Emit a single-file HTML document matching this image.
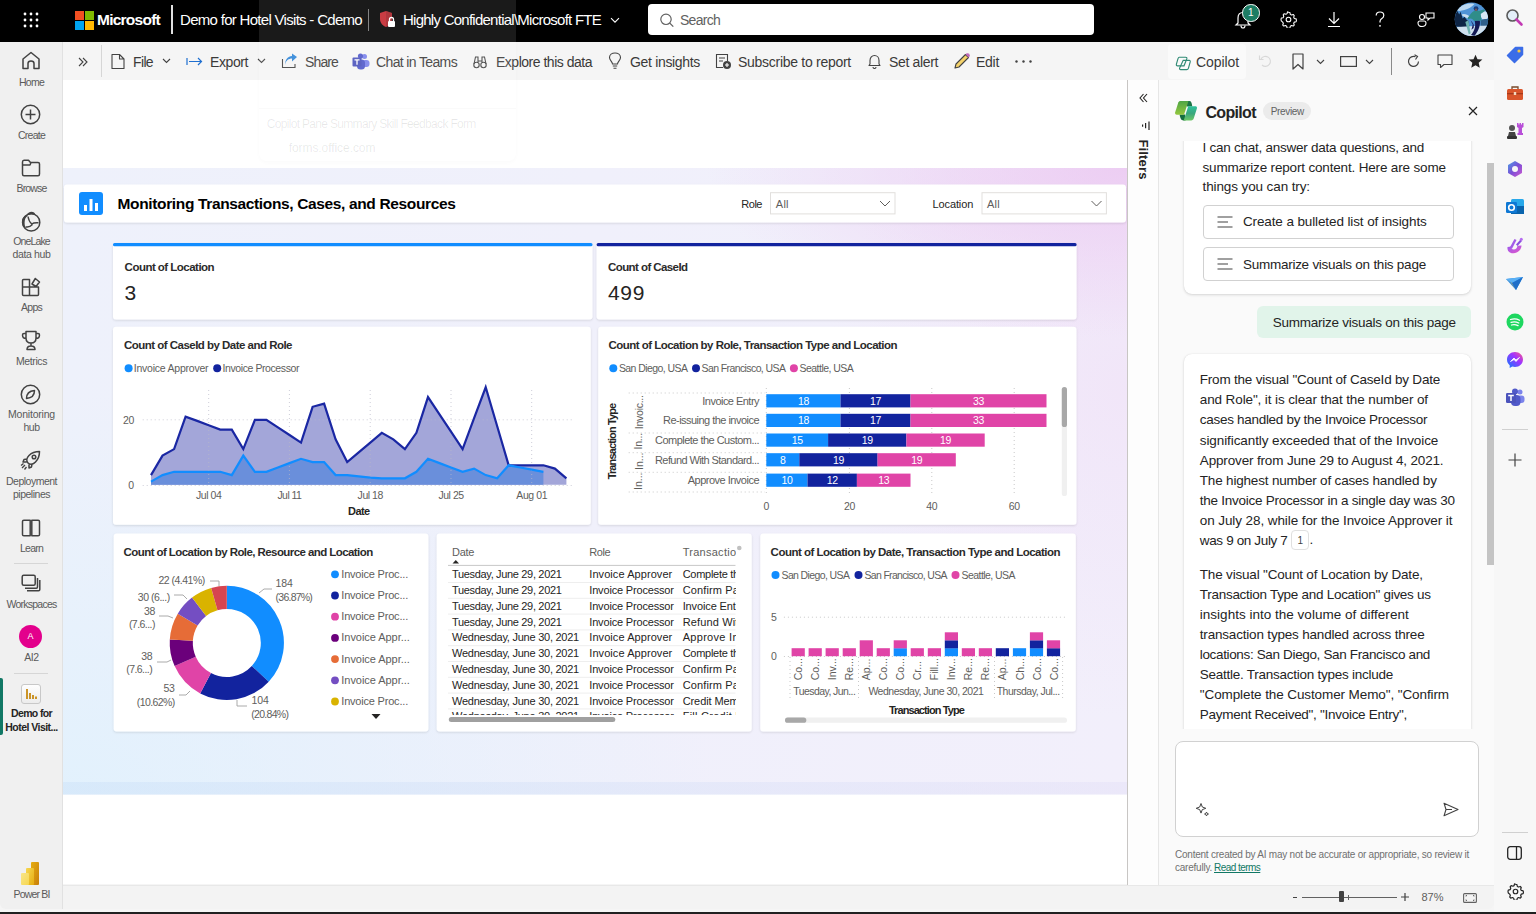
<!DOCTYPE html><html><head><meta charset="utf-8">
<style>
*{box-sizing:border-box;margin:0;padding:0}
html,body{width:1536px;height:914px;overflow:hidden;background:#202020;font-family:"Liberation Sans",sans-serif;color:#252423}
.abs{position:absolute}
#win{position:absolute;left:0;top:0;width:1536px;height:912px;background:#f5f5f5;overflow:hidden}
#topbar{position:absolute;left:0;top:0;width:1494px;height:42px;background:#000}
#nav{position:absolute;left:0;top:42px;width:63px;height:867px;background:#f0f0f0;border-right:1px solid #e1e1e1;border-bottom-left-radius:6px}
#toolbar{position:absolute;left:63px;top:42px;width:1431px;height:38px;background:#f5f5f5}
#canvas{position:absolute;left:63px;top:80px;width:1064px;height:804px;background:#fff;overflow:hidden}
#status{position:absolute;left:63px;top:884px;width:1431px;height:24px;background:#f3f3f3;border-top:1px solid #e6e6e6}
#filters{position:absolute;left:1127px;top:80px;width:35px;height:804px;background:#fafafa;border-left:1px solid #c8c6c4}
#copilot{position:absolute;left:1162px;top:80px;width:332px;height:804px;background:#fafafa;overflow:hidden}
#edge{position:absolute;left:1494px;top:0;width:42px;height:914px;background:#f7f7f7}
.t{position:absolute;white-space:nowrap;line-height:1}
.navl{position:absolute;left:0;width:63px;text-align:center;font-size:10.5px;color:#5a5a5a;line-height:13px;white-space:nowrap}
.tb{position:absolute;top:54px;font-size:14px;color:#3b3a39;white-space:nowrap;line-height:16px}
</style></head>
<body>
<div id="win">
  <div id="topbar">
    <svg class="abs" style="left:23px;top:12px" width="16" height="16" viewBox="0 0 16 16" fill="#fff"><circle cx="2" cy="2" r="1.4"></circle><circle cx="8" cy="2" r="1.4"></circle><circle cx="14" cy="2" r="1.4"></circle><circle cx="2" cy="8" r="1.4"></circle><circle cx="8" cy="8" r="1.4"></circle><circle cx="14" cy="8" r="1.4"></circle><circle cx="2" cy="14" r="1.4"></circle><circle cx="8" cy="14" r="1.4"></circle><circle cx="14" cy="14" r="1.4"></circle></svg>
    <svg class="abs" style="left:75px;top:11px" width="19" height="19" viewBox="0 0 19 19"><rect x="0" y="0" width="9" height="9" fill="#f25022"></rect><rect x="10" y="0" width="9" height="9" fill="#7fba00"></rect><rect x="0" y="10" width="9" height="9" fill="#00a4ef"></rect><rect x="10" y="10" width="9" height="9" fill="#ffb900"></rect></svg>
    <div class="t" style="left: 97px; top: 12px; font-size: 15.5px; font-weight: bold; color: rgb(255, 255, 255); --w: 63; letter-spacing: -0.75px;">Microsoft</div>
    <div class="abs" style="left:171px;top:5px;width:1.5px;height:29px;background:#e0e0e0"></div>
    <div class="t" style="left: 180px; top: 12px; font-size: 15px; color: rgb(255, 255, 255); --w: 182; letter-spacing: -0.7px;">Demo for Hotel Visits - Cdemo</div>
    <div class="abs" style="left:368px;top:9px;width:1px;height:22px;background:#777"></div>
    <svg class="abs" style="left:379px;top:10px" width="17" height="19" viewBox="0 0 17 19"><path d="M7 1 L13 3 L13 9 C13 13 10 16 7 17 C4 16 1 13 1 9 L1 3 Z" fill="#c4262e"></path><path d="M7 1 L13 3 L13 9 C13 13 10 16 7 17 Z" fill="#8a1c22" opacity=".5"></path><rect x="9" y="11" width="7" height="6" rx="1" fill="#fff"></rect><path d="M10.5 11 V9.5 a2 2 0 0 1 4 0 V11" stroke="#fff" stroke-width="1.3" fill="none"></path></svg>
    <div class="t" style="left: 403px; top: 12px; font-size: 15px; color: rgb(255, 255, 255); --w: 198; letter-spacing: -0.745px;">Highly Confidential\Microsoft FTE</div>
    <svg class="abs" style="left:610px;top:17px" width="10" height="7" viewBox="0 0 10 7"><path d="M1 1.2 L5 5.2 L9 1.2" stroke="#fff" stroke-width="1.1" fill="none"></path></svg>
    <div class="abs" style="left:648px;top:4px;width:446px;height:31px;background:#fff;border-radius:4px"></div>
    <svg class="abs" style="left:659px;top:12px" width="16" height="16" viewBox="0 0 16 16"><circle cx="7" cy="7.3" r="5.2" stroke="#616161" stroke-width="1.2" fill="none"></circle><path d="M10.8 11.1 L14.3 14.6" stroke="#616161" stroke-width="1.3"></path></svg>
    <div class="t" style="left: 680px; top: 13px; font-size: 14px; color: rgb(97, 97, 97); --w: 40; letter-spacing: -0.727px;">Search</div>
    <svg class="abs" style="left:1234px;top:9px" width="20" height="20" viewBox="0 0 20 20"><path d="M4 14 L4 9 C4 5.5 6 3.5 9 3.5 C12 3.5 14 5.5 14 9 L14 14 L16 16 L2 16 Z" stroke="#fff" stroke-width="1.2" fill="none"></path><path d="M7 16.5 C7 18 8 19 9 19 C10 19 11 18 11 16.5" stroke="#fff" stroke-width="1.2" fill="none"></path></svg>
    <div class="abs" style="left:1242px;top:4px;width:17.5px;height:17.5px;border-radius:50%;background:#1e7d64;border:1.2px solid #fff;color:#fff;font-size:10px;text-align:center;line-height:15px">1</div>
    <svg class="abs" style="left:1280px;top:11px" width="17" height="17" viewBox="0 0 24 24"><path d="M12 1.8l2 .4.6 2.6 1.6.9 2.5-.8 1.4 1.5-.8 2.5.9 1.6 2.6.6.4 2-.4 2-2.6.6-.9 1.6.8 2.5-1.4 1.5-2.5-.8-1.6.9-.6 2.6-2 .4-2-.4-.6-2.6-1.6-.9-2.5.8-1.4-1.5.8-2.5-.9-1.6L1.8 14l-.4-2 .4-2 2.6-.6.9-1.6-.8-2.5 1.4-1.5 2.5.8 1.6-.9.6-2.6z" stroke="#fff" stroke-width="1.5" fill="none" stroke-linejoin="round"></path><circle cx="12" cy="12" r="3.3" stroke="#fff" stroke-width="1.5" fill="none"></circle></svg>
    <svg class="abs" style="left:1326px;top:11px" width="16" height="17" viewBox="0 0 16 17"><path d="M8 1 V12 M3 7.5 L8 12.5 L13 7.5 M2 15.5 H14" stroke="#fff" stroke-width="1.2" fill="none"></path></svg>
    <svg class="abs" style="left:1375px;top:11px" width="10" height="17" viewBox="0 0 10 17"><path d="M1.2 4.5 C1.2 2.3 2.9 1 5 1 C7.2 1 8.8 2.4 8.8 4.4 C8.8 6.2 7.6 7 6.5 7.8 C5.5 8.5 5 9.2 5 10.6 V11.5" stroke="#fff" stroke-width="1.2" fill="none"></path><circle cx="5" cy="14.8" r=".9" fill="#fff"></circle></svg>
    <svg class="abs" style="left:1417px;top:11px" width="18" height="17" viewBox="0 0 18 17"><circle cx="5" cy="6" r="2.5" stroke="#fff" stroke-width="1.1" fill="none"></circle><path d="M1 12 C1 10.5 2 10 3 10 H7 C8 10 9 10.5 9 12 C9 14.5 7 15.5 5 15.5 C3 15.5 1 14.5 1 12 Z" stroke="#fff" stroke-width="1.1" fill="none"></path><path d="M9 2 H17 V7 H13 L11 9 V7 H9 Z" stroke="#fff" stroke-width="1.1" fill="none"></path></svg>
    <svg class="abs" style="left:1450px;top:0px" width="44" height="40" viewBox="0 0 1005 914"><defs><clipPath id="av"><circle cx="490" cy="440" r="382"></circle></clipPath></defs><g clip-path="url(#av)">
<rect width="1005" height="914" fill="#4f93d6"></rect>
<path d="M150 230 C250 120 400 60 560 90 C500 160 420 200 330 230 C260 250 200 260 150 230 Z" fill="#bcd8f0"></path>
<path d="M700 260 C780 230 860 260 880 340 C880 420 820 460 740 440 C700 400 690 320 700 260 Z" fill="#d6e6f4"></path>
<path d="M260 330 C330 300 400 330 450 380 L420 420 C350 400 300 380 260 330 Z" fill="#c9def0"></path>
<path d="M100 600 L120 330 L170 250 L210 330 L240 270 L290 420 L330 380 L380 450 L420 480 L450 640 Z" fill="#0e2545"></path>
<path d="M700 470 C760 440 830 430 880 440 L880 600 L700 600 Z" fill="#2f5f8a"></path>
<path d="M100 620 C300 600 600 590 900 580 L900 914 L100 914 Z" fill="#cfe0ee"></path>
<path d="M350 500 L420 460 L470 760 L430 790 Z" fill="#6fb3b0"></path>
<path d="M470 470 C520 520 560 560 540 640 L490 680 L520 560 Z" fill="#1d1f5e"></path>
<path d="M560 460 L680 470 C700 560 660 700 560 820 L480 800 C560 700 600 600 560 460 Z" fill="#141a55"></path>
<path d="M470 320 C520 250 600 230 660 250 L780 210 L800 250 L700 320 L720 470 L550 480 C520 440 480 400 420 440 L400 410 C430 380 450 350 470 320 Z" fill="#2f8d89"></path>
<circle cx="595" cy="195" r="55" fill="#1b3d7a"></circle><circle cx="595" cy="225" r="28" fill="#7a5a55"></circle>
</g></svg>
  </div>
  <div id="nav"></div>
  <svg class="abs" style="left:21px;top:51px" width="20" height="19" viewBox="0 0 20 19"><path d="M2 17.5 V8 L10 1.5 L18 8 V17.5 H13 V12.5 C13 11 12 10 10 10 C8 10 7 11 7 12.5 V17.5 Z" stroke="#424242" stroke-width="1.5" fill="none" stroke-linejoin="round"></path></svg>
  <div class="navl" style="top:75.5px"><span style="--w: 25; letter-spacing: -0.754px;">Home</span></div>
  <svg class="abs" style="left:20px;top:104px" width="21" height="21" viewBox="0 0 21 21"><circle cx="10.5" cy="10.5" r="9.2" stroke="#424242" stroke-width="1.5" fill="none" stroke-linejoin="round"></circle><path d="M10.5 5.5 V15.5 M5.5 10.5 H15.5" stroke="#424242" stroke-width="1.5" fill="none" stroke-linejoin="round"></path></svg>
  <div class="navl" style="top:128.5px"><span style="--w: 27; letter-spacing: -0.753px;">Create</span></div>
  <svg class="abs" style="left:21px;top:159px" width="20" height="18" viewBox="0 0 20 18"><path d="M1.5 3 C1.5 2 2 1.2 3 1.2 H7.5 L9.5 3.5 H17 C18 3.5 18.5 4.2 18.5 5 V15 C18.5 16 18 16.8 17 16.8 H3 C2 16.8 1.5 16 1.5 15 Z M1.5 6 H9 L10 3.5" stroke="#424242" stroke-width="1.5" fill="none" stroke-linejoin="round"></path></svg>
  <div class="navl" style="top:181.5px"><span style="--w: 30; letter-spacing: -0.836px;">Browse</span></div>
  <svg class="abs" style="left:15px;top:205px" width="32" height="32" viewBox="0 0 32 32"><circle cx="16.2" cy="17.4" r="8.6" stroke="#424242" stroke-width="1.5" fill="none"></circle><path d="M10.5 10.5 C7.5 12 6.8 15 7 18 C7.3 21 9 23 11 23.5 C9.8 21.5 9.3 18.5 9.8 15.5 C10.2 13 11.5 11.5 13 10.8 Z" fill="#424242"></path><path d="M11 11 C12.5 8 14.5 6.8 16.5 6.8 C18.5 6.8 20 8 20.5 9.8 C18 8.8 14.5 9 11 11 Z" fill="#424242"></path><path d="M13 11.5 C13.5 14.5 15 17.5 16.8 19 C18 18 19.5 17.5 23.5 17.8 M10.5 21.8 C13 22.5 15.5 21.5 17.5 19.5" stroke="#424242" stroke-width="1.4" fill="none"></path></svg>
  <div class="navl" style="top:235.0px"><span style="--w: 36.5; letter-spacing: -0.875px;">OneLake</span></div><div class="navl" style="top:248.0px"><span style="--w: 38; letter-spacing: -0.359px;">data hub</span></div>
  <svg class="abs" style="left:21px;top:277px" width="20" height="20" viewBox="0 0 20 20"><path d="M1.5 10 H8.5 V18.5 H2.5 C2 18.5 1.5 18 1.5 17.5 Z M8.5 10 H17.5 V17.5 C17.5 18 17 18.5 16.5 18.5 H8.5 M1.5 10 V3.5 C1.5 3 2 2.5 2.5 2.5 H8.5 V10 M11 7 L14.3 1.5 L18.5 5 L15 9.5 Z" stroke="#424242" stroke-width="1.5" fill="none" stroke-linejoin="round"></path></svg>
  <div class="navl" style="top:301.0px"><span style="--w: 21; letter-spacing: -0.734px;">Apps</span></div>
  <svg class="abs" style="left:21px;top:330px" width="20" height="21" viewBox="0 0 20 21"><path d="M5 1.5 H15 V8 C15 11 13 13 10 13 C7 13 5 11 5 8 Z M5 3.5 H3 C1.8 3.5 1.5 4 1.5 5 C1.5 7 3 8.5 5 8.5 M15 3.5 H17 C18.2 3.5 18.5 4 18.5 5 C18.5 7 17 8.5 15 8.5 M10 13 V16 M6 19.5 C6 17 8 16 10 16 C12 16 14 17 14 19.5 Z" stroke="#424242" stroke-width="1.5" fill="none" stroke-linejoin="round"></path></svg>
  <div class="navl" style="top:354.5px"><span style="--w: 31; letter-spacing: -0.406px;">Metrics</span></div>
  <svg class="abs" style="left:20px;top:384px" width="21" height="21" viewBox="0 0 21 21"><circle cx="10.5" cy="10.5" r="9.2" stroke="#424242" stroke-width="1.5" fill="none" stroke-linejoin="round"></circle><path d="M6.5 14.5 C6.5 10 9.5 7 14.5 6.5 C14.5 11 11.5 14 6.5 14.5 Z" stroke="#424242" stroke-width="1.5" fill="none" stroke-linejoin="round"></path></svg>
  <div class="navl" style="top:408.0px"><span style="--w: 47; letter-spacing: -0.203px;">Monitoring</span></div><div class="navl" style="top:421.0px"><span style="--w: 16; letter-spacing: -0.51px;">hub</span></div>
  <svg class="abs" style="left:20px;top:450px" width="22" height="21" viewBox="0 0 22 21"><path d="M8 13 C6 11 6.5 8 9 5.5 C11.5 3 15 1.5 19.5 1.5 C19.5 6 18 9.5 15.5 12 C13 14.5 10 15 8 13 Z M7 9 L4 9.5 L3 12 L6.5 12 M12 14 L11.5 17 L9 18 L9 14.5" stroke="#424242" stroke-width="1.5" fill="none" stroke-linejoin="round"></path><circle cx="14" cy="7" r="1.8" stroke="#424242" stroke-width="1.5" fill="none" stroke-linejoin="round"></circle><path d="M5 15 L2 18 M6.5 17 L4.5 19.5 M3.5 13.5 L1 15.5" stroke="#424242" stroke-width="1.3"></path></svg>
  <div class="navl" style="top:474.5px"><span style="--w: 51; letter-spacing: -0.503px;">Deployment</span></div><div class="navl" style="top:488.0px"><span style="--w: 37; letter-spacing: -0.495px;">pipelines</span></div>
  <svg class="abs" style="left:21px;top:519px" width="20" height="18" viewBox="0 0 20 18"><path d="M1.5 2.5 C1.5 1.8 2 1.2 2.8 1.2 H9.2 V16.8 H2.8 C2 16.8 1.5 16.2 1.5 15.5 Z M10.8 1.2 H17.2 C18 1.2 18.5 1.8 18.5 2.5 V15.5 C18.5 16.2 18 16.8 17.2 16.8 H10.8 Z" stroke="#424242" stroke-width="1.5" fill="none" stroke-linejoin="round"></path></svg>
  <div class="navl" style="top:541.5px"><span style="--w: 23; letter-spacing: -0.772px;">Learn</span></div>
  <div class="abs" style="left:14px;top:563px;width:34px;height:1px;background:#d6d6d6"></div>
  <svg class="abs" style="left:21px;top:574px" width="20" height="19" viewBox="0 0 20 19"><rect x="1.2" y="1.2" width="13" height="10" rx="1.5" stroke="#424242" stroke-width="1.5" fill="none" stroke-linejoin="round"></rect><path d="M16.5 4 V13 C16.5 13.7 16 14.2 15.3 14.2 H4 M18.8 6 V15.5 C18.8 16.3 18.3 16.8 17.5 16.8 H6" stroke="#424242" stroke-width="1.5" fill="none" stroke-linejoin="round"></path></svg>
  <div class="navl" style="top:598.0px"><span style="--w: 50; letter-spacing: -0.758px;">Workspaces</span></div>
  <div class="abs" style="left:19px;top:625px;width:23px;height:23px;border-radius:50%;background:#e3008c;color:#fff;font-size:9px;text-align:center;line-height:23px">A</div>
  <div class="navl" style="top:650.5px"><span style="--w: 14.5; letter-spacing: -0.422px;">AI2</span></div>
  <div class="abs" style="left:14px;top:673px;width:34px;height:1px;background:#d6d6d6"></div>
  <div class="abs" style="left:0;top:678px;width:2.5px;height:57px;background:#117865;border-radius:0 2px 2px 0"></div>
  <div class="abs" style="left:21px;top:684px;width:20px;height:20px;border-radius:3px;background:linear-gradient(#fefefe,#ececec);border:1px solid #c8c8c8"></div>
  <svg class="abs" style="left:24px;top:687px" width="14" height="14" viewBox="0 0 14 14"><path d="M3 2 V12 M6 6 V12 M9 8 V12 M12 9.5 V12" stroke="#c78a12" stroke-width="1.8"></path></svg>
  <div class="navl" style="top:707px;font-weight:bold;color:#252423"><span style="--w: 41; letter-spacing: -0.637px;">Demo for</span></div><div class="navl" style="top:721px;font-weight:bold;color:#252423"><span style="--w: 52.5; letter-spacing: -0.529px;">Hotel Visit...</span></div>
  <svg class="abs" style="left:21px;top:862px" width="18" height="23" viewBox="0 0 18 23"><defs><linearGradient id="pb1" x1="0" y1="0" x2="1" y2="1"><stop offset="0" stop-color="#e6ad10"></stop><stop offset="1" stop-color="#c87f0a"></stop></linearGradient><linearGradient id="pb2" x1="0" y1="0" x2="1" y2="1"><stop offset="0" stop-color="#f6d751"></stop><stop offset="1" stop-color="#e6ad10"></stop></linearGradient><linearGradient id="pb3" x1="0" y1="0" x2="1" y2="1"><stop offset="0" stop-color="#f9e589"></stop><stop offset="1" stop-color="#f6d751"></stop></linearGradient></defs><rect x="10" y="0" width="8" height="23" rx="1" fill="url(#pb1)"></rect><rect x="5" y="6" width="8" height="17" rx="1" fill="url(#pb2)"></rect><rect x="0" y="11" width="8" height="12" rx="1" fill="url(#pb3)"></rect></svg>
  <div class="navl" style="top:887.5px"><span style="--w: 36; letter-spacing: -0.826px;">Power BI</span></div>
  <div id="toolbar"></div>
  <svg class="abs" style="left:78px;top:57px" width="10" height="10" viewBox="0 0 10 10"><path d="M1 1 L5 5 L1 9 M5 1 L9 5 L5 9" stroke="#424242" stroke-width="1.1" fill="none"></path></svg>
  <div class="abs" style="left:101px;top:45px;width:1px;height:32px;background:#d6d6d6"></div>
  <svg class="abs" style="left:111px;top:53px" width="14" height="17" viewBox="0 0 14 17"><path d="M1 1.5 H8.5 L13 6 V15.5 H1 Z M8.5 1.5 V6 H13" stroke="#424242" stroke-width="1.1" fill="none" stroke-linejoin="round"></path></svg>
  <div class="tb" style="left: 133px; --w: 20; letter-spacing: -0.641px;">File</div>
  <svg class="abs" style="left:162px;top:58px" width="9" height="6" viewBox="0 0 9 6"><path d="M1 1 L4.5 4.5 L8 1" stroke="#424242" stroke-width="1.1" fill="none"></path></svg>
  <svg class="abs" style="left:186px;top:56px" width="17" height="11" viewBox="0 0 17 11"><path d="M1 2 V9 M3 5.5 H15.5 M12 2 L15.5 5.5 L12 9" stroke="#1f6fd0" stroke-width="1.2" fill="none"></path></svg>
  <div class="tb" style="left: 210px; --w: 38; letter-spacing: -0.411px;">Export</div>
  <svg class="abs" style="left:257px;top:58px" width="9" height="6" viewBox="0 0 9 6"><path d="M1 1 L4.5 4.5 L8 1" stroke="#424242" stroke-width="1.1" fill="none"></path></svg>
  <svg class="abs" style="left:281px;top:53px" width="17" height="16" viewBox="0 0 17 16"><path d="M1.5 6 V14.5 H14 V11" stroke="#424242" stroke-width="1.1" fill="none"></path><path d="M4 12 C4.5 7.5 8 5.5 11 5.5 V8.5 L16 4 L11 0.5 V3 C7 3 4 6.5 4 12 Z" fill="#2f86d8"></path></svg>
  <div class="tb" style="left: 305px; --w: 33; letter-spacing: -0.872px;">Share</div>
  <svg class="abs" style="left:352px;top:53px" width="18" height="17" viewBox="0 0 18 17"><circle cx="12.5" cy="3.5" r="2.5" fill="#7b83eb"></circle><rect x="10" y="7" width="7.5" height="7" rx="3" fill="#7b83eb"></rect><circle cx="8.5" cy="3" r="2.6" fill="#5059c9"></circle><rect x="5" y="6.5" width="8" height="10" rx="3.5" fill="#5059c9"></rect><rect x="0.5" y="4.5" width="9" height="9" rx="1" fill="#4b53bc"></rect><path d="M2.5 6.8 H7.5 M5 6.8 V11.8" stroke="#fff" stroke-width="1.3"></path></svg>
  <div class="tb" style="left: 376px; --w: 81; letter-spacing: -0.633px;">Chat in Teams</div>
  <svg class="abs" style="left:473px;top:54px" width="14" height="15" viewBox="0 0 14 15"><circle cx="3.5" cy="11" r="2.7" stroke="#424242" stroke-width="1.1" fill="none"></circle><circle cx="10.5" cy="11" r="2.7" stroke="#424242" stroke-width="1.1" fill="none"></circle><path d="M1 10 L2.5 3 H5 V8 M13 10 L11.5 3 H9 V8 M5 7 H9" stroke="#424242" stroke-width="1.1" fill="none"></path></svg>
  <div class="tb" style="left: 496px; --w: 96; letter-spacing: -0.488px;">Explore this data</div>
  <svg class="abs" style="left:608px;top:52px" width="14" height="18" viewBox="0 0 14 18"><path d="M4.5 12 C4.5 9.5 1.5 8.5 1.5 5.5 C1.5 2.8 4 1 7 1 C10 1 12.5 2.8 12.5 5.5 C12.5 8.5 9.5 9.5 9.5 12 Z M4.8 14 H9.2 M5.5 16.3 H8.5" stroke="#424242" stroke-width="1.1" fill="none"></path></svg>
  <div class="tb" style="left: 630px; --w: 70; letter-spacing: -0.328px;">Get insights</div>
  <svg class="abs" style="left:715px;top:53px" width="17" height="17" viewBox="0 0 17 17"><path d="M8 14.5 H1.5 V1.5 H12.5 V8" stroke="#424242" stroke-width="1.1" fill="none"></path><path d="M4 5 H10 M4 8 H8" stroke="#424242" stroke-width="1.1"></path><circle cx="12" cy="12" r="4" fill="#424242"></circle><path d="M12 10 V14 M10 12 H14" stroke="#fff" stroke-width="1.1"></path></svg>
  <div class="tb" style="left: 738px; --w: 113; letter-spacing: -0.279px;">Subscribe to report</div>
  <svg class="abs" style="left:868px;top:54px" width="13" height="15" viewBox="0 0 13 15"><path d="M2 10 V6.5 C2 3.5 4 1.5 6.5 1.5 C9 1.5 11 3.5 11 6.5 V10 L12 11.5 H1 Z M5 13 C5 14 5.7 14.5 6.5 14.5 C7.3 14.5 8 14 8 13" stroke="#424242" stroke-width="1.1" fill="none" stroke-linejoin="round"></path></svg>
  <div class="tb" style="left: 889px; --w: 49; letter-spacing: -0.349px;">Set alert</div>
  <svg class="abs" style="left:953px;top:53px" width="18" height="17" viewBox="0 0 18 17"><path d="M2 15 L3 11 L12.5 1.5 L15.5 4.5 L6 14 Z" stroke="#424242" stroke-width="1.1" fill="#f5d36b" stroke-linejoin="round"></path><path d="M12.5 1.5 L15.5 4.5 L16.5 3.5 C17 3 17 2 16.5 1.5 L15.5 0.5 C15 0 14 0 13.5 0.5Z" fill="#c06ab8"></path></svg>
  <div class="tb" style="left: 976px; --w: 23; letter-spacing: -0.281px;">Edit</div>
  <svg class="abs" style="left:1015px;top:60px" width="17" height="3" viewBox="0 0 17 3" fill="#424242"><circle cx="1.5" cy="1.5" r="1.2"></circle><circle cx="8.5" cy="1.5" r="1.2"></circle><circle cx="15.5" cy="1.5" r="1.2"></circle></svg>
  <div class="abs" style="left:1168px;top:44px;width:78px;height:35px;background:#fafafa;border-radius:4px"></div>
  <svg class="abs" style="left:1170px;top:50px" width="25" height="24" viewBox="0 0 25 24"><path d="M9.2 7.2 H15.6 C16.6 7.2 17.1 7.9 16.8 8.9 L14 15.8 H7.6 C6.6 15.8 6.1 15.1 6.4 14.1 L8 8.6 C8.3 7.7 8.6 7.2 9.2 7.2 Z" stroke="#2f8a74" stroke-width="1.15" fill="none"></path><path d="M13.2 10.3 H19.2 C20 10.3 20.4 11 20.2 11.9 L18.4 18.4 C18.1 19.2 17.5 19.6 16.7 19.6 H10.6 C9.8 19.6 9.4 18.9 9.6 18.1 Z" stroke="#2f8a74" stroke-width="1.15" fill="none"></path></svg>
  <div class="tb" style="left: 1196px; --w: 43; letter-spacing: -0.085px;">Copilot</div>
  <svg class="abs" style="left:1258px;top:54px" width="14" height="14" viewBox="0 0 14 14"><path d="M3 5 A5 5 0 1 1 4 11 M1.5 1.5 V5.5 H5.5" stroke="#d8d8d8" stroke-width="1.1" fill="none"></path></svg>
  <svg class="abs" style="left:1292px;top:53px" width="12" height="17" viewBox="0 0 12 17"><path d="M1 1 H11 V16 L6 11.5 L1 16 Z" stroke="#424242" stroke-width="1.2" fill="none" stroke-linejoin="round"></path></svg>
  <svg class="abs" style="left:1316px;top:59px" width="9" height="6" viewBox="0 0 9 6"><path d="M1 1 L4.5 4.5 L8 1" stroke="#424242" stroke-width="1.1" fill="none"></path></svg>
  <svg class="abs" style="left:1340px;top:56px" width="17" height="11" viewBox="0 0 17 11"><rect x="0.6" y="0.6" width="15.8" height="9.8" stroke="#424242" stroke-width="1.2" fill="none"></rect></svg>
  <svg class="abs" style="left:1365px;top:59px" width="9" height="6" viewBox="0 0 9 6"><path d="M1 1 L4.5 4.5 L8 1" stroke="#424242" stroke-width="1.1" fill="none"></path></svg>
  <div class="abs" style="left:1391px;top:48px;width:1px;height:27px;background:#8a8a8a"></div>
  <svg class="abs" style="left:1406px;top:54px" width="15" height="15" viewBox="0 0 15 15"><path d="M12.5 7.5 A5 5 0 1 1 9.5 2.8 M8.5 0.8 L11.5 2.5 L9.5 5.5" stroke="#424242" stroke-width="1.2" fill="none"></path></svg>
  <svg class="abs" style="left:1437px;top:54px" width="16" height="15" viewBox="0 0 16 15"><path d="M1 1 H15 V10.5 H7 L3.5 13.5 V10.5 H1 Z" stroke="#424242" stroke-width="1.1" fill="none" stroke-linejoin="round"></path></svg>
  <svg class="abs" style="left:1468px;top:54px" width="15" height="15" viewBox="0 0 24 24"><path d="M12 1 L15.2 8.2 L23 8.9 L17.1 14.1 L18.8 21.9 L12 17.8 L5.2 21.9 L6.9 14.1 L1 8.9 L8.8 8.2 Z" fill="#252423"></path></svg>
  <!--CANVAS-->
<div class="abs" style="left:63px;top:80px;width:1064px;height:804px;background:#fff"></div>
<div class="abs" id="page" style="left:63px;top:168px;width:1064px;height:626px;background:
    radial-gradient(ellipse 420px 170px at 1064px 0px, rgba(236,202,242,.9), rgba(236,202,242,0) 100%),
    radial-gradient(ellipse 300px 330px at 1064px 220px, rgba(240,222,246,.55), rgba(240,222,246,0) 100%),
    radial-gradient(ellipse 650px 400px at 0px 626px, rgba(224,241,253,.85), rgba(224,241,253,0) 100%),
    linear-gradient(90deg,#eef1fb,#f2effb)"></div>
<div class="abs" style="left:63px;top:782px;width:1064px;height:12.5px;background:linear-gradient(90deg,rgba(205,226,248,.5),rgba(222,218,246,.35))"></div>
<svg class="abs" style="left:63px;top:80px" width="1064" height="804" viewBox="63 80 1064 804">
<defs><filter id="sh" x="-5%" y="-5%" width="110%" height="120%"><feDropShadow dx="0" dy="1" stdDeviation="1.2" flood-color="#000" flood-opacity=".12"></feDropShadow></filter>
<clipPath id="tblclip"><rect x="440" y="540" width="295.7" height="175"></rect></clipPath>
<clipPath id="tblclip2"><rect x="440" y="540" width="295.7" height="172.5"></rect></clipPath></defs>
<rect x="64" y="184.5" width="1062" height="38" rx="3" fill="#fff" filter="url(#sh)"></rect>
<rect x="79" y="192" width="24" height="23" rx="3" fill="#118dff"></rect>
<path d="M85.5 211 V205 M91 211 V199 M96.5 211 V203" stroke="#fff" stroke-width="3"></path>
<rect x="770.5" y="192.7" width="124.5" height="21.2" fill="#fff" stroke="#e1dfdd"></rect>
<path d="M880 201 L885 206 L890 201" stroke="#605e5c" stroke-width="1" fill="none"></path>
<rect x="982" y="192.7" width="124.4" height="21.2" fill="#fff" stroke="#e1dfdd"></rect>
<path d="M1091.5 201 L1096.5 206 L1101.5 201" stroke="#605e5c" stroke-width="1" fill="none"></path>
<g filter="url(#sh)">
<rect x="113" y="243" width="479.5" height="76.5" rx="3" fill="#fff"></rect>
<rect x="596.6" y="243" width="480" height="76.5" rx="3" fill="#fff"></rect>
<rect x="113" y="326.8" width="477.8" height="198" rx="3" fill="#fff"></rect>
<rect x="598.2" y="326.8" width="478.3" height="198" rx="3" fill="#fff"></rect>
<rect x="113.7" y="533.4" width="314.7" height="198" rx="3" fill="#fff"></rect>
<rect x="436.7" y="533.4" width="315" height="198" rx="3" fill="#fff"></rect>
<rect x="760.3" y="533.4" width="315.5" height="198" rx="3" fill="#fff"></rect>
</g>
<rect x="113" y="243" width="479.5" height="3.2" rx="1.5" fill="#118dff"></rect>
<rect x="596.6" y="243" width="480" height="3.2" rx="1.5" fill="#12239e"></rect>
<path d="M151,484.8 L151.0,475.1 L162.5,455.6 L174.1,449.1 L185.6,416.6 L197.2,420.9 L208.7,425.2 L220.2,429.6 L231.8,429.6 L243.3,449.1 L254.9,419.8 L266.4,419.8 L277.9,427.4 L289.5,435.0 L301.0,442.6 L312.6,406.8 L324.1,403.6 L335.6,439.3 L347.2,462.1 L358.7,452.3 L370.3,442.6 L381.8,432.8 L393.3,439.3 L404.9,449.1 L416.4,432.8 L428.0,397.1 L439.5,414.4 L451.0,431.7 L462.6,449.1 L474.1,418.2 L485.7,387.3 L497.2,426.3 L508.7,465.3 L520.3,465.3 L531.8,465.3 L543.4,465.3 L554.9,468.6 L566.4,478.3 L566.4,484.8 Z" fill="#a3a6d9"></path>
<path d="M151,484.8 L151.0,481.6 L162.5,475.1 L174.1,471.8 L185.6,471.8 L197.2,471.8 L208.7,471.8 L220.2,471.8 L231.8,475.1 L243.3,455.6 L254.9,471.8 L266.4,471.8 L277.9,467.5 L289.5,463.1 L301.0,458.8 L312.6,462.1 L324.1,462.1 L335.6,475.1 L347.2,475.1 L358.7,476.4 L370.3,477.7 L381.8,478.3 L393.3,478.3 L404.9,478.3 L416.4,471.8 L428.0,458.8 L439.5,463.1 L451.0,467.5 L462.6,471.8 L474.1,468.6 L485.7,475.1 L497.2,478.3 L508.7,465.3 L520.3,467.5 L531.8,469.6 L543.4,471.8 L543.4,484.8 Z" fill="#6a8fdb"></path>
<g stroke="#b8b8c8" stroke-width="1" stroke-dasharray="1 3" opacity=".7">
<line x1="142.7" y1="419.8" x2="572.7" y2="419.8"></line>
<line x1="208.7" y1="390" x2="208.7" y2="484.8"></line><line x1="289.4" y1="390" x2="289.4" y2="484.8"></line><line x1="370.2" y1="390" x2="370.2" y2="484.8"></line><line x1="451" y1="390" x2="451" y2="484.8"></line><line x1="531.7" y1="390" x2="531.7" y2="484.8"></line>
<line x1="142.7" y1="485.5" x2="572.7" y2="485.5"></line>
</g>
<polyline points="151.0,475.1 162.5,455.6 174.1,449.1 185.6,416.6 197.2,420.9 208.7,425.2 220.2,429.6 231.8,429.6 243.3,449.1 254.9,419.8 266.4,419.8 277.9,427.4 289.5,435.0 301.0,442.6 312.6,406.8 324.1,403.6 335.6,439.3 347.2,462.1 358.7,452.3 370.3,442.6 381.8,432.8 393.3,439.3 404.9,449.1 416.4,432.8 428.0,397.1 439.5,414.4 451.0,431.7 462.6,449.1 474.1,418.2 485.7,387.3 497.2,426.3 508.7,465.3 520.3,465.3 531.8,465.3 543.4,465.3 554.9,468.6 566.4,478.3" fill="none" stroke="#1a27a3" stroke-width="2.2" stroke-linejoin="miter"></polyline>
<polyline points="151.0,481.6 162.5,475.1 174.1,471.8 185.6,471.8 197.2,471.8 208.7,471.8 220.2,471.8 231.8,475.1 243.3,455.6 254.9,471.8 266.4,471.8 277.9,467.5 289.5,463.1 301.0,458.8 312.6,462.1 324.1,462.1 335.6,475.1 347.2,475.1 358.7,476.4 370.3,477.7 381.8,478.3 393.3,478.3 404.9,478.3 416.4,471.8 428.0,458.8 439.5,463.1 451.0,467.5 462.6,471.8 474.1,468.6 485.7,475.1 497.2,478.3 508.7,465.3 520.3,467.5 531.8,469.6 543.4,471.8" fill="none" stroke="#118dff" stroke-width="2.2" stroke-linejoin="miter"></polyline>
<circle cx="128.6" cy="368.2" r="4" fill="#118dff"></circle><circle cx="217.2" cy="368.2" r="4" fill="#12239e"></circle>
<g stroke="#c8c8c8" stroke-width="1" stroke-dasharray="1 3">
<line x1="849.4" y1="388" x2="849.4" y2="493"></line><line x1="931.8" y1="388" x2="931.8" y2="493"></line><line x1="1014.2" y1="388" x2="1014.2" y2="493"></line><line x1="766.3" y1="388" x2="766.3" y2="493"></line>
<line x1="628.7" y1="393" x2="765" y2="393"></line><line x1="628.7" y1="433" x2="765" y2="433"></line><line x1="628.7" y1="452.7" x2="765" y2="452.7"></line><line x1="628.7" y1="472.3" x2="765" y2="472.3"></line><line x1="628.7" y1="492" x2="765" y2="492"></line>
</g>
<circle cx="613.3" cy="368.2" r="4" fill="#118dff"></circle><circle cx="696" cy="368.2" r="4" fill="#12239e"></circle><circle cx="793.9" cy="368.2" r="4" fill="#e044a7"></circle>
<rect x="1061.8" y="387" width="5.2" height="109" rx="2.6" fill="#f0f0f0"></rect>
<rect x="1061.8" y="387" width="5.2" height="40" rx="2.6" fill="#a8a8a8"></rect>
<rect x="766.3" y="394.2" width="74.2" height="13.2" fill="#118dff"></rect>
<rect x="840.5" y="394.2" width="70.0" height="13.2" fill="#12239e"></rect>
<rect x="910.5" y="394.2" width="136.0" height="13.2" fill="#e044a7"></rect>
<rect x="766.3" y="413.8" width="74.2" height="13.2" fill="#118dff"></rect>
<rect x="840.5" y="413.8" width="70.0" height="13.2" fill="#12239e"></rect>
<rect x="910.5" y="413.8" width="136.0" height="13.2" fill="#e044a7"></rect>
<rect x="766.3" y="433.5" width="61.8" height="13.2" fill="#118dff"></rect>
<rect x="828.1" y="433.5" width="78.3" height="13.2" fill="#12239e"></rect>
<rect x="906.4" y="433.5" width="78.3" height="13.2" fill="#e044a7"></rect>
<rect x="766.3" y="453.2" width="33.0" height="13.2" fill="#118dff"></rect>
<rect x="799.3" y="453.2" width="78.3" height="13.2" fill="#12239e"></rect>
<rect x="877.5" y="453.2" width="78.3" height="13.2" fill="#e044a7"></rect>
<rect x="766.3" y="473.6" width="41.2" height="13.2" fill="#118dff"></rect>
<rect x="807.5" y="473.6" width="49.4" height="13.2" fill="#12239e"></rect>
<rect x="856.9" y="473.6" width="53.6" height="13.2" fill="#e044a7"></rect>
<path d="M226.80,585.80 A57.1,57.1 0 0 1 268.73,681.66 L251.77,665.98 A34,34 0 0 0 226.80,608.90 Z" fill="#118dff"></path>
<path d="M268.73,681.66 A57.1,57.1 0 0 1 200.19,693.42 L210.96,672.98 A34,34 0 0 0 251.77,665.98 Z" fill="#12239e"></path>
<path d="M200.19,693.42 A57.1,57.1 0 0 1 174.63,666.11 L195.74,656.72 A34,34 0 0 0 210.96,672.98 Z" fill="#e044a7"></path>
<path d="M174.63,666.11 A57.1,57.1 0 0 1 169.80,639.49 L192.86,640.87 A34,34 0 0 0 195.74,656.72 Z" fill="#6b007b"></path>
<path d="M169.80,639.49 A57.1,57.1 0 0 1 177.77,613.63 L197.61,625.47 A34,34 0 0 0 192.86,640.87 Z" fill="#e66c37"></path>
<path d="M177.77,613.63 A57.1,57.1 0 0 1 192.03,597.61 L206.10,615.93 A34,34 0 0 0 197.61,625.47 Z" fill="#744ec2"></path>
<path d="M192.03,597.61 A57.1,57.1 0 0 1 211.18,587.98 L217.50,610.20 A34,34 0 0 0 206.10,615.93 Z" fill="#d9b300"></path>
<path d="M211.18,587.98 A57.1,57.1 0 0 1 226.80,585.80 L226.80,608.90 A34,34 0 0 0 217.50,610.20 Z" fill="#d64550"></path>
<g stroke="#a0a0a0" stroke-width="0.9" fill="none">
<path d="M259 593 L264 589 H272"></path>
<path d="M237 700 V706 H247"></path>
<path d="M190 691 L186 695 H179"></path>
<path d="M171 660 L167 662 H157"></path>
<path d="M173 618 L168 616 H159"></path>
<path d="M187 599 L183 595 H174"></path>
<path d="M219 586 V581 H210"></path>
</g><circle cx="335" cy="574.3" r="3.9" fill="#118dff"></circle>
<circle cx="335" cy="595.5" r="3.9" fill="#12239e"></circle>
<circle cx="335" cy="616.7" r="3.9" fill="#e044a7"></circle>
<circle cx="335" cy="637.9" r="3.9" fill="#6b007b"></circle>
<circle cx="335" cy="659.1" r="3.9" fill="#e66c37"></circle>
<circle cx="335" cy="680.3" r="3.9" fill="#744ec2"></circle>
<circle cx="335" cy="701.5" r="3.9" fill="#d9b300"></circle>
<path d="M371.5 714 H380.5 L376 719 Z" fill="#252423"></path>
<g clip-path="url(#tblclip)">
<line x1="448" y1="565.4" x2="735.7" y2="565.4" stroke="#c8c8c8" stroke-width="1"></line>
<line x1="448" y1="582.5" x2="735.7" y2="582.5" stroke="#eeeeee" stroke-width="1"></line>
<line x1="448" y1="598.3" x2="735.7" y2="598.3" stroke="#eeeeee" stroke-width="1"></line>
<line x1="448" y1="614.1" x2="735.7" y2="614.1" stroke="#eeeeee" stroke-width="1"></line>
<line x1="448" y1="629.9" x2="735.7" y2="629.9" stroke="#eeeeee" stroke-width="1"></line>
<line x1="448" y1="645.7" x2="735.7" y2="645.7" stroke="#eeeeee" stroke-width="1"></line>
<line x1="448" y1="661.5" x2="735.7" y2="661.5" stroke="#eeeeee" stroke-width="1"></line>
<line x1="448" y1="677.3" x2="735.7" y2="677.3" stroke="#eeeeee" stroke-width="1"></line>
<line x1="448" y1="693.1" x2="735.7" y2="693.1" stroke="#eeeeee" stroke-width="1"></line>
<line x1="448" y1="708.9" x2="735.7" y2="708.9" stroke="#eeeeee" stroke-width="1"></line>
<line x1="448" y1="724.7" x2="735.7" y2="724.7" stroke="#eeeeee" stroke-width="1"></line>
</g>
<path d="M452.5 563.5 L455.8 560 L459 563.5 Z" fill="#252423"></path>
<circle cx="739.3" cy="548" r="2.3" fill="#c0c0c0"></circle>
<rect x="448.8" y="717" width="166.5" height="5" rx="2.5" fill="#a0a0a0"></rect>
<line x1="783.9" y1="617.2" x2="1065.5" y2="617.2" stroke="#c8c8c8" stroke-width="1" stroke-dasharray="1 3"></line>
<line x1="783.9" y1="656.5" x2="1065.5" y2="656.5" stroke="#c8c8c8" stroke-width="1" stroke-dasharray="1 3"></line>
<g stroke="#c8c8c8" stroke-width="1" stroke-dasharray="1 3"><line x1="790" y1="657" x2="790" y2="700"></line><line x1="858.5" y1="657" x2="858.5" y2="700"></line><line x1="994.5" y1="657" x2="994.5" y2="700"></line><line x1="1062.6" y1="657" x2="1062.6" y2="700"></line></g>
<circle cx="775.5" cy="575" r="4" fill="#118dff"></circle><circle cx="858.5" cy="575" r="4" fill="#12239e"></circle><circle cx="955.5" cy="575" r="4" fill="#e044a7"></circle>
<rect x="785" y="717.5" width="282" height="5.3" rx="2.6" fill="#f0f0f0"></rect>
<rect x="785" y="717.5" width="21.3" height="5.3" rx="2.6" fill="#a8a8a8"></rect>
<rect x="791.6" y="648.2" width="13.2" height="8.0" fill="#e044a7"></rect>
<rect x="808.6" y="648.2" width="13.2" height="8.0" fill="#e044a7"></rect>
<rect x="825.6" y="648.2" width="13.2" height="8.0" fill="#e044a7"></rect>
<rect x="842.7" y="648.2" width="13.2" height="8.0" fill="#e044a7"></rect>
<rect x="859.7" y="640.3" width="13.2" height="15.9" fill="#e044a7"></rect>
<rect x="876.7" y="648.2" width="13.2" height="8.0" fill="#e044a7"></rect>
<rect x="893.7" y="648.2" width="13.2" height="8.0" fill="#118dff"></rect>
<rect x="893.7" y="640.3" width="13.2" height="8.0" fill="#e044a7"></rect>
<rect x="910.7" y="648.2" width="13.2" height="8.0" fill="#e044a7"></rect>
<rect x="927.8" y="648.2" width="13.2" height="8.0" fill="#e044a7"></rect>
<rect x="944.8" y="648.2" width="13.2" height="8.0" fill="#118dff"></rect>
<rect x="944.8" y="640.3" width="13.2" height="8.0" fill="#12239e"></rect>
<rect x="944.8" y="632.3" width="13.2" height="8.0" fill="#e044a7"></rect>
<rect x="961.8" y="648.2" width="13.2" height="8.0" fill="#e044a7"></rect>
<rect x="978.8" y="648.2" width="13.2" height="8.0" fill="#e044a7"></rect>
<rect x="995.8" y="648.2" width="13.2" height="8.0" fill="#12239e"></rect>
<rect x="1012.9" y="648.2" width="13.2" height="8.0" fill="#118dff"></rect>
<rect x="1029.9" y="648.2" width="13.2" height="8.0" fill="#118dff"></rect>
<rect x="1029.9" y="640.3" width="13.2" height="8.0" fill="#12239e"></rect>
<rect x="1029.9" y="632.3" width="13.2" height="8.0" fill="#e044a7"></rect>
<rect x="1046.9" y="648.2" width="13.2" height="8.0" fill="#12239e"></rect>
<rect x="1046.9" y="640.3" width="13.2" height="8.0" fill="#e044a7"></rect>
</svg>
<div class="t" style="left: 117.5px; top: 195.8px; font-size: 15.5px; color: rgb(0, 0, 0); font-weight: bold; --w: 338; letter-spacing: -0.356px;">Monitoring Transactions, Cases, and Resources</div>
<div class="t" style="left: 741.3px; top: 199px; font-size: 11px; color: rgb(37, 36, 35); font-weight: normal; --w: 20.7; letter-spacing: -0.481px;">Role</div>
<div class="t" style="left: 775.8px; top: 199px; font-size: 11px; color: rgb(96, 94, 92); font-weight: normal; --w: 13; letter-spacing: 0.255px;">All</div>
<div class="t" style="left: 932.5px; top: 199px; font-size: 11px; color: rgb(37, 36, 35); font-weight: normal; --w: 40.7; letter-spacing: -0.112px;">Location</div>
<div class="t" style="left: 987px; top: 199px; font-size: 11px; color: rgb(96, 94, 92); font-weight: normal; --w: 13; letter-spacing: 0.255px;">All</div>
<div class="t" style="left: 124.6px; top: 261.6px; font-size: 11.5px; color: rgb(43, 43, 43); font-weight: bold; --w: 89.5; letter-spacing: -0.522px;">Count of Location</div>
<div class="t" style="left: 124.6px; top: 281.5px; font-size: 21px; color: rgb(37, 36, 35); font-weight: normal; --w: 12; letter-spacing: 0.313px;">3</div>
<div class="t" style="left: 608px; top: 261.6px; font-size: 11.5px; color: rgb(43, 43, 43); font-weight: bold; --w: 79.5; letter-spacing: -0.578px;">Count of CaseId</div>
<div class="t" style="left: 608px; top: 281.5px; font-size: 21px; color: rgb(37, 36, 35); font-weight: normal; --w: 37; letter-spacing: 0.651px;">499</div>
<div class="t" style="left: 124px; top: 340.1px; font-size: 11.5px; color: rgb(43, 43, 43); font-weight: bold; --w: 168; letter-spacing: -0.521px;">Count of CaseId by Date and Role</div>
<div class="t" style="left: 133.8px; top: 362.9px; font-size: 10.5px; color: rgb(96, 94, 92); font-weight: normal; --w: 74.5; letter-spacing: -0.232px;">Invoice Approver</div>
<div class="t" style="left: 222.5px; top: 362.9px; font-size: 10.5px; color: rgb(96, 94, 92); font-weight: normal; --w: 76.5; letter-spacing: -0.409px;">Invoice Processor</div>
<div class="t" style="left: 123px; top: 414.6px; font-size: 10.5px; color: rgb(96, 94, 92); font-weight: normal; --w: 10.8; letter-spacing: -0.444px;">20</div>
<div class="t" style="left: 128.3px; top: 479.6px; font-size: 10.5px; color: rgb(96, 94, 92); font-weight: normal; --w: 5.5; letter-spacing: -0.344px;">0</div>
<div class="t" style="left: 196px; top: 490.1px; font-size: 10.5px; color: rgb(96, 94, 92); font-weight: normal; --w: 25.3; letter-spacing: -0.455px;">Jul 04</div>
<div class="t" style="left: 277.4px; top: 490.1px; font-size: 10.5px; color: rgb(96, 94, 92); font-weight: normal; --w: 24; letter-spacing: -0.542px;">Jul 11</div>
<div class="t" style="left: 357.6px; top: 490.1px; font-size: 10.5px; color: rgb(96, 94, 92); font-weight: normal; --w: 25.3; letter-spacing: -0.455px;">Jul 18</div>
<div class="t" style="left: 438.4px; top: 490.1px; font-size: 10.5px; color: rgb(96, 94, 92); font-weight: normal; --w: 25.3; letter-spacing: -0.455px;">Jul 25</div>
<div class="t" style="left: 516.3px; top: 490.1px; font-size: 10.5px; color: rgb(96, 94, 92); font-weight: normal; --w: 30.8; letter-spacing: -0.414px;">Aug 01</div>
<div class="t" style="left: 348.1px; top: 505.5px; font-size: 11px; color: rgb(37, 36, 35); font-weight: bold; --w: 21.3; letter-spacing: -0.636px;">Date</div>
<div class="t" style="left: 608.5px; top: 340.1px; font-size: 11.5px; color: rgb(43, 43, 43); font-weight: bold; --w: 288.5; letter-spacing: -0.526px;">Count of Location by Role, Transaction Type and Location</div>
<div class="t" style="left: 618.9px; top: 362.9px; font-size: 10.5px; color: rgb(96, 94, 92); font-weight: normal; --w: 68.6; letter-spacing: -0.562px;">San Diego, USA</div>
<div class="t" style="left: 701.6px; top: 362.9px; font-size: 10.5px; color: rgb(96, 94, 92); font-weight: normal; --w: 83.7; letter-spacing: -0.603px;">San Francisco, USA</div>
<div class="t" style="left: 799.5px; top: 362.9px; font-size: 10.5px; color: rgb(96, 94, 92); font-weight: normal; --w: 53.8; letter-spacing: -0.527px;">Seattle, USA</div>
<div class="t" style="left: 797.9px; top: 395.6px; font-size: 10.5px; color: rgb(255, 255, 255); font-weight: normal; --w: 11.0; letter-spacing: -0.344px;">18</div>
<div class="t" style="left: 870px; top: 395.6px; font-size: 10.5px; color: rgb(255, 255, 255); font-weight: normal; --w: 11.0; letter-spacing: -0.344px;">17</div>
<div class="t" style="left: 973px; top: 395.6px; font-size: 10.5px; color: rgb(255, 255, 255); font-weight: normal; --w: 11.0; letter-spacing: -0.344px;">33</div>
<div class="t" style="left: 702.3px; top: 395.7px; font-size: 11px; color: rgb(96, 94, 92); font-weight: normal; --w: 56.7; letter-spacing: -0.53px;">Invoice Entry</div>
<div class="t" style="left: 797.9px; top: 415.2px; font-size: 10.5px; color: rgb(255, 255, 255); font-weight: normal; --w: 11.0; letter-spacing: -0.344px;">18</div>
<div class="t" style="left: 870px; top: 415.2px; font-size: 10.5px; color: rgb(255, 255, 255); font-weight: normal; --w: 11.0; letter-spacing: -0.344px;">17</div>
<div class="t" style="left: 973px; top: 415.2px; font-size: 10.5px; color: rgb(255, 255, 255); font-weight: normal; --w: 11.0; letter-spacing: -0.344px;">33</div>
<div class="t" style="left: 663px; top: 415.3px; font-size: 11px; color: rgb(96, 94, 92); font-weight: normal; --w: 96; letter-spacing: -0.528px;">Re-issuing the invoice</div>
<div class="t" style="left: 791.7px; top: 434.9px; font-size: 10.5px; color: rgb(255, 255, 255); font-weight: normal; --w: 11.0; letter-spacing: -0.344px;">15</div>
<div class="t" style="left: 861.7px; top: 434.9px; font-size: 10.5px; color: rgb(255, 255, 255); font-weight: normal; --w: 11.0; letter-spacing: -0.344px;">19</div>
<div class="t" style="left: 940px; top: 434.9px; font-size: 10.5px; color: rgb(255, 255, 255); font-weight: normal; --w: 11.0; letter-spacing: -0.344px;">19</div>
<div class="t" style="left: 655px; top: 435px; font-size: 11px; color: rgb(96, 94, 92); font-weight: normal; --w: 104; letter-spacing: -0.526px;">Complete the Custom...</div>
<div class="t" style="left: 780px; top: 454.6px; font-size: 10.5px; color: rgb(255, 255, 255); font-weight: normal; --w: 5.5; letter-spacing: -0.344px;">8</div>
<div class="t" style="left: 832.9px; top: 454.6px; font-size: 10.5px; color: rgb(255, 255, 255); font-weight: normal; --w: 11.0; letter-spacing: -0.344px;">19</div>
<div class="t" style="left: 911.2px; top: 454.6px; font-size: 10.5px; color: rgb(255, 255, 255); font-weight: normal; --w: 11.0; letter-spacing: -0.344px;">19</div>
<div class="t" style="left: 655px; top: 454.7px; font-size: 11px; color: rgb(96, 94, 92); font-weight: normal; --w: 104; letter-spacing: -0.583px;">Refund With Standard...</div>
<div class="t" style="left: 781.4px; top: 475px; font-size: 10.5px; color: rgb(255, 255, 255); font-weight: normal; --w: 11.0; letter-spacing: -0.344px;">10</div>
<div class="t" style="left: 826.7px; top: 475px; font-size: 10.5px; color: rgb(255, 255, 255); font-weight: normal; --w: 11.0; letter-spacing: -0.344px;">12</div>
<div class="t" style="left: 878.2px; top: 475px; font-size: 10.5px; color: rgb(255, 255, 255); font-weight: normal; --w: 11.0; letter-spacing: -0.344px;">13</div>
<div class="t" style="left: 687.8px; top: 475.1px; font-size: 11px; color: rgb(96, 94, 92); font-weight: normal; --w: 71.2; letter-spacing: -0.513px;">Approve Invoice</div>
<div class="t" style="left: 763.5px; top: 500.6px; font-size: 10.5px; color: rgb(96, 94, 92); font-weight: normal; --w: 5.5; letter-spacing: -0.344px;">0</div>
<div class="t" style="left: 843.9px; top: 500.6px; font-size: 10.5px; color: rgb(96, 94, 92); font-weight: normal; --w: 11; letter-spacing: -0.344px;">20</div>
<div class="t" style="left: 926.3px; top: 500.6px; font-size: 10.5px; color: rgb(96, 94, 92); font-weight: normal; --w: 11; letter-spacing: -0.344px;">40</div>
<div class="t" style="left: 1008.7px; top: 500.6px; font-size: 10.5px; color: rgb(96, 94, 92); font-weight: normal; --w: 11; letter-spacing: -0.344px;">60</div>
<div class="t" style="left: 574.5px; top: 435.7px; font-size: 11px; font-weight: bold; color: rgb(37, 36, 35); transform: rotate(-90deg); transform-origin: 50% 50%; --w: 75.5; letter-spacing: -0.885px;">Transaction Type</div>
<div class="t" style="left: 621.7px; top: 407.2px; font-size: 10.5px; color: rgb(96, 94, 92); transform: rotate(-90deg); transform-origin: 50% 50%; --w: 33.8; letter-spacing: -0.265px;">Invoic...</div>
<div class="t" style="left: 630.4px; top: 436.2px; font-size: 10.5px; color: rgb(96, 94, 92); transform: rotate(-90deg); transform-origin: 50% 50%; --w: 16.5; letter-spacing: -0.203px;">In...</div>
<div class="t" style="left: 629.8px; top: 456.3px; font-size: 10.5px; color: rgb(96, 94, 92); transform: rotate(-90deg); transform-origin: 50% 50%; --w: 17.6; letter-spacing: 0.017px;">In...</div>
<div class="t" style="left: 630px; top: 476.1px; font-size: 10.5px; color: rgb(96, 94, 92); transform: rotate(-90deg); transform-origin: 50% 50%; --w: 17.3; letter-spacing: -0.043px;">In...</div>
<div class="t" style="left: 275.6px; top: 578.2px; font-size: 10.5px; color: rgb(96, 94, 92); font-weight: normal; --w: 17; letter-spacing: -0.177px;">184</div>
<div class="t" style="left: 275.6px; top: 591.5px; font-size: 10.5px; color: rgb(96, 94, 92); font-weight: normal; --w: 36.5; letter-spacing: -0.764px;">(36.87%)</div>
<div class="t" style="left: 251.6px; top: 695.4px; font-size: 10.5px; color: rgb(96, 94, 92); font-weight: normal; --w: 17; letter-spacing: -0.177px;">104</div>
<div class="t" style="left: 251.3px; top: 708.6px; font-size: 10.5px; color: rgb(96, 94, 92); font-weight: normal; --w: 37; letter-spacing: -0.701px;">(20.84%)</div>
<div class="t" style="left: 163.6px; top: 683.4px; font-size: 10.5px; color: rgb(96, 94, 92); font-weight: normal; --w: 11; letter-spacing: -0.344px;">53</div>
<div class="t" style="left: 136.8px; top: 696.5px; font-size: 10.5px; color: rgb(96, 94, 92); font-weight: normal; --w: 37.8; letter-spacing: -0.601px;">(10.62%)</div>
<div class="t" style="left: 141.2px; top: 650.8px; font-size: 10.5px; color: rgb(96, 94, 92); font-weight: normal; --w: 11; letter-spacing: -0.344px;">38</div>
<div class="t" style="left: 126.2px; top: 664.1px; font-size: 10.5px; color: rgb(96, 94, 92); font-weight: normal; --w: 26; letter-spacing: -0.543px;">(7.6...)</div>
<div class="t" style="left: 143.9px; top: 605.6px; font-size: 10.5px; color: rgb(96, 94, 92); font-weight: normal; --w: 11; letter-spacing: -0.344px;">38</div>
<div class="t" style="left: 128.9px; top: 618.8px; font-size: 10.5px; color: rgb(96, 94, 92); font-weight: normal; --w: 26; letter-spacing: -0.543px;">(7.6...)</div>
<div class="t" style="left: 137.8px; top: 591.5px; font-size: 10.5px; color: rgb(96, 94, 92); font-weight: normal; --w: 32; letter-spacing: -0.465px;">30 (6...)</div>
<div class="t" style="left: 158.5px; top: 575px; font-size: 10.5px; color: rgb(96, 94, 92); font-weight: normal; --w: 46.2; letter-spacing: -0.517px;">22 (4.41%)</div>
<div class="t" style="left: 123.6px; top: 547.2px; font-size: 11.5px; color: rgb(43, 43, 43); font-weight: bold; --w: 249; letter-spacing: -0.576px;">Count of Location by Role, Resource and Location</div>
<div class="t" style="left: 341.3px; top: 568.8px; font-size: 11px; color: rgb(96, 94, 92); font-weight: normal; --w: 66.7; letter-spacing: -0.2px;">Invoice Proc...</div>
<div class="t" style="left: 341.3px; top: 590px; font-size: 11px; color: rgb(96, 94, 92); font-weight: normal; --w: 66.7; letter-spacing: -0.2px;">Invoice Proc...</div>
<div class="t" style="left: 341.3px; top: 611.2px; font-size: 11px; color: rgb(96, 94, 92); font-weight: normal; --w: 66.7; letter-spacing: -0.2px;">Invoice Proc...</div>
<div class="t" style="left: 341.3px; top: 632.4px; font-size: 11px; color: rgb(96, 94, 92); font-weight: normal; --w: 68.4; letter-spacing: -0.047px;">Invoice Appr...</div>
<div class="t" style="left: 341.3px; top: 653.6px; font-size: 11px; color: rgb(96, 94, 92); font-weight: normal; --w: 68.4; letter-spacing: -0.047px;">Invoice Appr...</div>
<div class="t" style="left: 341.3px; top: 674.8px; font-size: 11px; color: rgb(96, 94, 92); font-weight: normal; --w: 68.4; letter-spacing: -0.047px;">Invoice Appr...</div>
<div class="t" style="left: 341.3px; top: 696px; font-size: 11px; color: rgb(96, 94, 92); font-weight: normal; --w: 66.7; letter-spacing: -0.2px;">Invoice Proc...</div>
<div class="t" style="left: 452px; top: 546.7px; font-size: 11px; color: rgb(96, 94, 92); font-weight: normal; --w: 22; letter-spacing: -0.313px;">Date</div>
<div class="t" style="left: 589.3px; top: 546.7px; font-size: 11px; color: rgb(96, 94, 92); font-weight: normal; --w: 21; letter-spacing: -0.406px;">Role</div>
<div class="abs" style="left:440px;top:540px;width:295.7px;height:175px;overflow:hidden">
<div class="t" style="left: 242.7px; top: 6.7px; font-size: 11px; color: rgb(96, 94, 92); font-weight: normal; --w: 60; letter-spacing: 0.267px;">Transaction</div>
<div class="t" style="left: 12px; top: 29.1px; font-size: 11px; color: rgb(37, 36, 35); font-weight: normal; --w: 109.5; letter-spacing: -0.332px;">Tuesday, June 29, 2021</div>
<div class="t" style="left: 149.3px; top: 29.1px; font-size: 11px; color: rgb(37, 36, 35); font-weight: normal; --w: 83; letter-spacing: 0.066px;">Invoice Approver</div>
<div class="t" style="left: 242.7px; top: 29.1px; font-size: 11px; color: rgb(37, 36, 35); font-weight: normal; --w: 62; letter-spacing: -0.286px;">Complete the</div>
<div class="t" style="left: 12px; top: 44.9px; font-size: 11px; color: rgb(37, 36, 35); font-weight: normal; --w: 109.5; letter-spacing: -0.332px;">Tuesday, June 29, 2021</div>
<div class="t" style="left: 149.3px; top: 44.9px; font-size: 11px; color: rgb(37, 36, 35); font-weight: normal; --w: 84.5; letter-spacing: -0.173px;">Invoice Processor</div>
<div class="t" style="left: 242.7px; top: 44.9px; font-size: 11px; color: rgb(37, 36, 35); font-weight: normal; --w: 62; letter-spacing: 0.134px;">Confirm Pay</div>
<div class="t" style="left: 12px; top: 60.7px; font-size: 11px; color: rgb(37, 36, 35); font-weight: normal; --w: 109.5; letter-spacing: -0.332px;">Tuesday, June 29, 2021</div>
<div class="t" style="left: 149.3px; top: 60.7px; font-size: 11px; color: rgb(37, 36, 35); font-weight: normal; --w: 84.5; letter-spacing: -0.173px;">Invoice Processor</div>
<div class="t" style="left: 242.7px; top: 60.7px; font-size: 11px; color: rgb(37, 36, 35); font-weight: normal; --w: 62; letter-spacing: -0.123px;">Invoice Entry</div>
<div class="t" style="left: 12px; top: 76.5px; font-size: 11px; color: rgb(37, 36, 35); font-weight: normal; --w: 109.5; letter-spacing: -0.332px;">Tuesday, June 29, 2021</div>
<div class="t" style="left: 149.3px; top: 76.5px; font-size: 11px; color: rgb(37, 36, 35); font-weight: normal; --w: 84.5; letter-spacing: -0.173px;">Invoice Processor</div>
<div class="t" style="left: 242.7px; top: 76.5px; font-size: 11px; color: rgb(37, 36, 35); font-weight: normal; --w: 62; letter-spacing: 0.134px;">Refund With</div>
<div class="t" style="left: 12px; top: 92.3px; font-size: 11px; color: rgb(37, 36, 35); font-weight: normal; --w: 127; letter-spacing: -0.247px;">Wednesday, June 30, 2021</div>
<div class="t" style="left: 149.3px; top: 92.3px; font-size: 11px; color: rgb(37, 36, 35); font-weight: normal; --w: 83; letter-spacing: 0.066px;">Invoice Approver</div>
<div class="t" style="left: 242.7px; top: 92.3px; font-size: 11px; color: rgb(37, 36, 35); font-weight: normal; --w: 62; letter-spacing: 0.3px;">Approve Inv</div>
<div class="t" style="left: 12px; top: 108.1px; font-size: 11px; color: rgb(37, 36, 35); font-weight: normal; --w: 127; letter-spacing: -0.247px;">Wednesday, June 30, 2021</div>
<div class="t" style="left: 149.3px; top: 108.1px; font-size: 11px; color: rgb(37, 36, 35); font-weight: normal; --w: 83; letter-spacing: 0.066px;">Invoice Approver</div>
<div class="t" style="left: 242.7px; top: 108.1px; font-size: 11px; color: rgb(37, 36, 35); font-weight: normal; --w: 62; letter-spacing: -0.286px;">Complete the</div>
<div class="t" style="left: 12px; top: 123.9px; font-size: 11px; color: rgb(37, 36, 35); font-weight: normal; --w: 127; letter-spacing: -0.247px;">Wednesday, June 30, 2021</div>
<div class="t" style="left: 149.3px; top: 123.9px; font-size: 11px; color: rgb(37, 36, 35); font-weight: normal; --w: 84.5; letter-spacing: -0.173px;">Invoice Processor</div>
<div class="t" style="left: 242.7px; top: 123.9px; font-size: 11px; color: rgb(37, 36, 35); font-weight: normal; --w: 62; letter-spacing: 0.134px;">Confirm Pay</div>
<div class="t" style="left: 12px; top: 139.7px; font-size: 11px; color: rgb(37, 36, 35); font-weight: normal; --w: 127; letter-spacing: -0.247px;">Wednesday, June 30, 2021</div>
<div class="t" style="left: 149.3px; top: 139.7px; font-size: 11px; color: rgb(37, 36, 35); font-weight: normal; --w: 84.5; letter-spacing: -0.173px;">Invoice Processor</div>
<div class="t" style="left: 242.7px; top: 139.7px; font-size: 11px; color: rgb(37, 36, 35); font-weight: normal; --w: 62; letter-spacing: 0.134px;">Confirm Pay</div>
<div class="t" style="left: 12px; top: 155.5px; font-size: 11px; color: rgb(37, 36, 35); font-weight: normal; --w: 127; letter-spacing: -0.247px;">Wednesday, June 30, 2021</div>
<div class="t" style="left: 149.3px; top: 155.5px; font-size: 11px; color: rgb(37, 36, 35); font-weight: normal; --w: 84.5; letter-spacing: -0.173px;">Invoice Processor</div>
<div class="t" style="left: 242.7px; top: 155.5px; font-size: 11px; color: rgb(37, 36, 35); font-weight: normal; --w: 62; letter-spacing: -0.088px;">Credit Memo</div>
<div class="t" style="left: 12px; top: 171.3px; font-size: 11px; color: rgb(37, 36, 35); font-weight: normal; --w: 127; letter-spacing: -0.247px;">Wednesday, June 30, 2021</div>
<div class="t" style="left: 149.3px; top: 171.3px; font-size: 11px; color: rgb(37, 36, 35); font-weight: normal; --w: 84.5; letter-spacing: -0.173px;">Invoice Processor</div>
<div class="t" style="left: 242.7px; top: 171.3px; font-size: 11px; color: rgb(37, 36, 35); font-weight: normal; --w: 62; letter-spacing: 0.256px;">Fill Credit M</div>
</div>
<div class="t" style="left: 770.6px; top: 547.2px; font-size: 11.5px; color: rgb(43, 43, 43); font-weight: bold; --w: 289.4; letter-spacing: -0.51px;">Count of Location by Date, Transaction Type and Location</div>
<div class="t" style="left: 781.5px; top: 569.8px; font-size: 10.5px; color: rgb(96, 94, 92); font-weight: normal; --w: 67.8; letter-spacing: -0.619px;">San Diego, USA</div>
<div class="t" style="left: 864.5px; top: 569.8px; font-size: 10.5px; color: rgb(96, 94, 92); font-weight: normal; --w: 82.3; letter-spacing: -0.68px;">San Francisco, USA</div>
<div class="t" style="left: 961.5px; top: 569.8px; font-size: 10.5px; color: rgb(96, 94, 92); font-weight: normal; --w: 53.5; letter-spacing: -0.552px;">Seattle, USA</div>
<div class="t" style="left: 771px; top: 612px; font-size: 10.5px; color: rgb(96, 94, 92); font-weight: normal; --w: 5.5; letter-spacing: -0.344px;">5</div>
<div class="t" style="left: 771px; top: 651px; font-size: 10.5px; color: rgb(96, 94, 92); font-weight: normal; --w: 5.5; letter-spacing: -0.344px;">0</div>
<div class="t" style="left:798.2px;top:675.0px;font-size:10.5px;color:#605e5c;transform:rotate(-90deg);transform-origin:0 50%;">Co...</div>
<div class="t" style="left:815.2px;top:675.0px;font-size:10.5px;color:#605e5c;transform:rotate(-90deg);transform-origin:0 50%;">Co...</div>
<div class="t" style="left:832.2px;top:675.0px;font-size:10.5px;color:#605e5c;transform:rotate(-90deg);transform-origin:0 50%;">Inv...</div>
<div class="t" style="left:849.3px;top:675.0px;font-size:10.5px;color:#605e5c;transform:rotate(-90deg);transform-origin:0 50%;">Re...</div>
<div class="t" style="left:866.3px;top:675.0px;font-size:10.5px;color:#605e5c;transform:rotate(-90deg);transform-origin:0 50%;">Ap...</div>
<div class="t" style="left:883.3px;top:675.0px;font-size:10.5px;color:#605e5c;transform:rotate(-90deg);transform-origin:0 50%;">Co...</div>
<div class="t" style="left:900.3px;top:675.0px;font-size:10.5px;color:#605e5c;transform:rotate(-90deg);transform-origin:0 50%;">Co...</div>
<div class="t" style="left:917.3px;top:675.0px;font-size:10.5px;color:#605e5c;transform:rotate(-90deg);transform-origin:0 50%;">Cr...</div>
<div class="t" style="left:934.4px;top:675.0px;font-size:10.5px;color:#605e5c;transform:rotate(-90deg);transform-origin:0 50%;">Fill...</div>
<div class="t" style="left:951.4px;top:675.0px;font-size:10.5px;color:#605e5c;transform:rotate(-90deg);transform-origin:0 50%;">Inv...</div>
<div class="t" style="left:968.4px;top:675.0px;font-size:10.5px;color:#605e5c;transform:rotate(-90deg);transform-origin:0 50%;">Re...</div>
<div class="t" style="left:985.4px;top:675.0px;font-size:10.5px;color:#605e5c;transform:rotate(-90deg);transform-origin:0 50%;">Re...</div>
<div class="t" style="left:1002.4px;top:675.0px;font-size:10.5px;color:#605e5c;transform:rotate(-90deg);transform-origin:0 50%;">Ap...</div>
<div class="t" style="left:1019.5px;top:675.0px;font-size:10.5px;color:#605e5c;transform:rotate(-90deg);transform-origin:0 50%;">Ch...</div>
<div class="t" style="left:1036.5px;top:675.0px;font-size:10.5px;color:#605e5c;transform:rotate(-90deg);transform-origin:0 50%;">Co...</div>
<div class="t" style="left:1053.5px;top:675.0px;font-size:10.5px;color:#605e5c;transform:rotate(-90deg);transform-origin:0 50%;">Co...</div>
<div class="t" style="left: 793.3px; top: 686.2px; font-size: 10.5px; color: rgb(96, 94, 92); font-weight: normal; --w: 62; letter-spacing: -0.575px;">Tuesday, Jun...</div>
<div class="t" style="left: 868.4px; top: 686.2px; font-size: 10.5px; color: rgb(96, 94, 92); font-weight: normal; --w: 115; letter-spacing: -0.495px;">Wednesday, June 30, 2021</div>
<div class="t" style="left: 996.7px; top: 686.2px; font-size: 10.5px; color: rgb(96, 94, 92); font-weight: normal; --w: 63; letter-spacing: -0.5px;">Thursday, Jul...</div>
<div class="t" style="left: 888.9px; top: 705.3px; font-size: 11px; color: rgb(37, 36, 35); font-weight: bold; --w: 75; letter-spacing: -0.916px;">Transaction Type</div>
<!--/CANVAS-->
  <div class="abs" style="left:63px;top:885px;width:1431px;height:24px;background:#f3f3f3;border-bottom-right-radius:6px"></div>
<!--RIGHT-->
<div class="abs" style="left:1127px;top:80px;width:1px;height:805px;background:#c8c6c4"></div>
<div class="abs" style="left:1128px;top:80px;width:30px;height:805px;background:#fdfdfd"></div>
<div class="abs" style="left:1158px;top:80px;width:1px;height:805px;background:#e6e6e6"></div>
<svg class="abs" style="left:1139px;top:93px" width="9" height="10" viewBox="0 0 9 10"><path d="M4.5 1 L1 5 L4.5 9 M8 1 L4.5 5 L8 9" stroke="#252423" stroke-width="1.1" fill="none"></path></svg>
<svg class="abs" style="left:1141px;top:120px" width="10" height="11" viewBox="0 0 10 11"><path d="M8 1.5 V10 M4.6 3 V8.3 M1.6 4.6 V6.7" stroke="#252423" stroke-width="1.2" fill="none"></path></svg>
<div class="t" style="left: 1122.5px; top: 153.3px; font-size: 13px; font-weight: bold; color: rgb(37, 36, 35); transform: rotate(90deg); transform-origin: 50% 50%; --w: 40; letter-spacing: 0.141px;">Filters</div>
<div class="abs" style="left:1159px;top:80px;width:335px;height:805px;background:#fafafa"></div>
<svg class="abs" style="left:1170px;top:96px" width="32" height="30" viewBox="0 0 32 30"><defs><linearGradient id="cpg1" x1="0" y1="0" x2="0" y2="1"><stop offset="0" stop-color="#4ea444"></stop><stop offset="1" stop-color="#93c73f"></stop></linearGradient><linearGradient id="cpg2" x1="0" y1="0" x2="0" y2="1"><stop offset="0" stop-color="#2ec29c"></stop><stop offset=".5" stop-color="#3aa77e"></stop><stop offset="1" stop-color="#6cc766"></stop></linearGradient></defs>
<path d="M16 4.9 H19.5 C21 4.9 21.8 6.5 22.3 10.4 H17 Z" fill="#1c7447"></path>
<path d="M9.6 18.5 H15 L15.6 24.4 H13.2 C11.6 24.4 10.2 23 9.6 18.5 Z" fill="#166f40"></path>
<path d="M10.5 4.9 H18.5 L14 18.7 H6.8 C5.4 18.7 4.8 17.6 5.2 16.2 L8.3 6.6 C8.7 5.5 9.4 4.9 10.5 4.9 Z" fill="url(#cpg1)"></path>
<path d="M18.2 10.2 H25.6 C26.8 10.2 27.3 11.3 26.9 12.6 L23.8 22.3 C23.4 23.7 22.5 24.4 21.2 24.4 H13.7 Z" fill="url(#cpg2)"></path></svg>
<div class="t" style="left: 1205.4px; top: 104.5px; font-size: 16px; font-weight: bold; color: rgb(36, 36, 36); --w: 50.5; letter-spacing: -0.656px;">Copilot</div>
<div class="abs" style="left:1263px;top:102px;width:48px;height:18px;border-radius:9px;background:#ebebeb"></div>
<div class="t" style="left: 1270.8px; top: 106.5px; font-size: 10px; color: rgb(97, 97, 97); --w: 33; letter-spacing: -0.368px;">Preview</div>
<svg class="abs" style="left:1468px;top:106px" width="10" height="10" viewBox="0 0 10 10"><path d="M1 1 L9 9 M9 1 L1 9" stroke="#242424" stroke-width="1.2"></path></svg>
<div class="abs" style="left:1159px;top:141px;width:328px;height:588px;overflow:hidden">
  <div class="abs" style="left:25px;top:-10px;width:287px;height:163px;background:#fff;border-radius:8px;box-shadow:0 1px 3px rgba(0,0,0,.14), 0 0 1px rgba(0,0,0,.12)"></div>
  <div class="abs" style="left:98px;top:165px;width:214px;height:32px;background:#e1f4ea;border-radius:6px"></div>
  <div class="abs" style="left:25px;top:213px;width:287px;height:420px;background:#fff;border-radius:8px;box-shadow:0 1px 3px rgba(0,0,0,.14), 0 0 1px rgba(0,0,0,.12)"></div>
</div>
<div class="abs" style="left:1202.5px;top:205px;width:251px;height:34px;border:1px solid #d1d1d1;border-radius:4px;background:#fff"></div>
<div class="abs" style="left:1202.5px;top:247px;width:251px;height:34px;border:1px solid #d1d1d1;border-radius:4px;background:#fff"></div>
<svg class="abs" style="left:1217px;top:216px" width="16" height="12" viewBox="0 0 16 12"><path d="M0.5 1 H15.5 M0.5 6 H11 M0.5 11 H15.5" stroke="#424242" stroke-width="1.1"></path></svg>
<svg class="abs" style="left:1217px;top:258px" width="16" height="12" viewBox="0 0 16 12"><path d="M0.5 1 H15.5 M0.5 6 H11 M0.5 11 H15.5" stroke="#424242" stroke-width="1.1"></path></svg>
<div class="abs" style="left:1487px;top:163px;width:6.5px;height:402px;background:#c4c4c4"></div>
<div class="t" style="left: 1202.5px; top: 140.7px; font-size: 13.5px; color: rgb(36, 36, 36); font-weight: normal; --w: 221.5; letter-spacing: -0.254px;">I can chat, answer data questions, and</div>
<div class="t" style="left: 1202.5px; top: 160.6px; font-size: 13.5px; color: rgb(36, 36, 36); font-weight: normal; --w: 243.3; letter-spacing: -0.168px;">summarize report content. Here are some</div>
<div class="t" style="left: 1202.5px; top: 180.4px; font-size: 13.5px; color: rgb(36, 36, 36); font-weight: normal; --w: 107.5; letter-spacing: -0.109px;">things you can try:</div>
<div class="t" style="left: 1242.9px; top: 215.4px; font-size: 13.5px; color: rgb(36, 36, 36); font-weight: normal; --w: 183.8; letter-spacing: -0.112px;">Create a bulleted list of insights</div>
<div class="t" style="left: 1242.9px; top: 257.6px; font-size: 13.5px; color: rgb(36, 36, 36); font-weight: normal; --w: 183; letter-spacing: -0.253px;">Summarize visuals on this page</div>
<div class="t" style="left: 1272.8px; top: 316.4px; font-size: 13.5px; color: rgb(36, 36, 36); font-weight: normal; --w: 183; letter-spacing: -0.253px;">Summarize visuals on this page</div>
<div class="t" style="left: 1199.8px; top: 373.3px; font-size: 13.5px; color: rgb(36, 36, 36); font-weight: normal; --w: 240.2; letter-spacing: -0.211px;">From the visual "Count of CaseId by Date</div>
<div class="t" style="left: 1199.8px; top: 393.4px; font-size: 13.5px; color: rgb(36, 36, 36); font-weight: normal; --w: 228.2; letter-spacing: -0.115px;">and Role", it is clear that the number of</div>
<div class="t" style="left: 1199.8px; top: 413.4px; font-size: 13.5px; color: rgb(36, 36, 36); font-weight: normal; --w: 227.4; letter-spacing: -0.296px;">cases handled by the Invoice Processor</div>
<div class="t" style="left: 1199.8px; top: 433.5px; font-size: 13.5px; color: rgb(36, 36, 36); font-weight: normal; --w: 238.4; letter-spacing: -0.095px;">significantly exceeded that of the Invoice</div>
<div class="t" style="left: 1199.8px; top: 453.5px; font-size: 13.5px; color: rgb(36, 36, 36); font-weight: normal; --w: 243.7; letter-spacing: -0.156px;">Approver from June 29 to August 4, 2021.</div>
<div class="t" style="left: 1199.8px; top: 473.6px; font-size: 13.5px; color: rgb(36, 36, 36); font-weight: normal; --w: 236.9; letter-spacing: -0.184px;">The highest number of cases handled by</div>
<div class="t" style="left: 1199.8px; top: 493.6px; font-size: 13.5px; color: rgb(36, 36, 36); font-weight: normal; --w: 254.9; letter-spacing: -0.262px;">the Invoice Processor in a single day was 30</div>
<div class="t" style="left: 1199.8px; top: 513.7px; font-size: 13.5px; color: rgb(36, 36, 36); font-weight: normal; --w: 252.6; letter-spacing: -0.09px;">on July 28, while for the Invoice Approver it</div>
<div class="t" style="left: 1199.8px; top: 533.8px; font-size: 13.5px; color: rgb(36, 36, 36); font-weight: normal; --w: 87.7; letter-spacing: -0.357px;">was 9 on July 7</div>
<div class="abs" style="left:1291.3px;top:529.7px;width:17.7px;height:20.7px;border:1px solid #e0e0e0;border-radius:4px;background:#fff"></div>
<div class="t" style="left: 1297.5px; top: 535.5px; font-size: 10px; color: rgb(66, 66, 66); font-weight: normal; --w: 5.5; letter-spacing: -0.063px;">1</div>
<div class="t" style="left: 1309.5px; top: 533.1px; font-size: 13.5px; color: rgb(36, 36, 36); font-weight: normal; --w: 3.5; letter-spacing: -0.266px;">.</div>
<div class="abs" style="left:1159px;top:141px;width:328px;height:588px;overflow:hidden">
<div class="t" style="left: 40.8px; top: 427.2px; font-size: 13.5px; color: rgb(36, 36, 36); font-weight: normal; --w: 223; letter-spacing: -0.182px;">The visual "Count of Location by Date,</div>
<div class="t" style="left: 40.8px; top: 447.1px; font-size: 13.5px; color: rgb(36, 36, 36); font-weight: normal; --w: 230.9; letter-spacing: -0.283px;">Transaction Type and Location" gives us</div>
<div class="t" style="left: 40.8px; top: 467px; font-size: 13.5px; color: rgb(36, 36, 36); font-weight: normal; --w: 208.9; letter-spacing: 0.014px;">insights into the volume of different</div>
<div class="t" style="left: 40.8px; top: 487px; font-size: 13.5px; color: rgb(36, 36, 36); font-weight: normal; --w: 224.7; letter-spacing: -0.189px;">transaction types handled across three</div>
<div class="t" style="left: 40.8px; top: 506.9px; font-size: 13.5px; color: rgb(36, 36, 36); font-weight: normal; --w: 230.2; letter-spacing: -0.351px;">locations: San Diego, San Francisco and</div>
<div class="t" style="left: 40.8px; top: 526.8px; font-size: 13.5px; color: rgb(36, 36, 36); font-weight: normal; --w: 193.2; letter-spacing: -0.255px;">Seattle. Transaction types include</div>
<div class="t" style="left: 40.8px; top: 546.6px; font-size: 13.5px; color: rgb(36, 36, 36); font-weight: normal; --w: 249.2; letter-spacing: -0.099px;">"Complete the Customer Memo", "Confirm</div>
<div class="t" style="left: 40.8px; top: 566.5px; font-size: 13.5px; color: rgb(36, 36, 36); font-weight: normal; --w: 207.1; letter-spacing: -0.282px;">Payment Received", "Invoice Entry",</div>
</div>
<div class="abs" style="left:1175px;top:741.2px;width:304px;height:95.4px;border:1px solid #d1d1d1;border-radius:8px;background:#fff"></div>
<svg class="abs" style="left:1195px;top:802px" width="15" height="15" viewBox="0 0 15 15"><path d="M6 1.5 L7.3 5 L10.8 6.3 L7.3 7.6 L6 11.1 L4.7 7.6 L1.2 6.3 L4.7 5 Z" stroke="#424242" stroke-width="1" fill="none" stroke-linejoin="round"></path><path d="M11.5 10 L12.1 11.4 L13.5 12 L12.1 12.6 L11.5 14 L10.9 12.6 L9.5 12 L10.9 11.4 Z" stroke="#424242" stroke-width=".9" fill="none"></path></svg>
<svg class="abs" style="left:1443px;top:802px" width="16" height="15" viewBox="0 0 16 15"><path d="M1 1.2 L15 7.5 L1 13.8 L3 7.5 Z M3 7.5 H9" stroke="#424242" stroke-width="1.1" fill="none" stroke-linejoin="round"></path></svg>
<div class="t" style="left: 1175px; top: 849.9px; font-size: 10px; color: rgb(112, 112, 112); font-weight: normal; --w: 294; letter-spacing: -0.231px;">Content created by AI may not be accurate or appropriate, so review it</div>
<div class="t" style="left: 1175px; top: 863px; font-size: 10px; color: rgb(112, 112, 112); font-weight: normal; --w: 37; letter-spacing: -0.228px;">carefully.</div>
<div class="t" style="left: 1214px; top: 863px; font-size: 10px; color: rgb(17, 120, 101); font-weight: normal; --w: 46.3; text-decoration: underline; letter-spacing: -0.539px;">Read terms</div>
<div class="abs" style="left:63px;top:884.5px;width:1431px;height:1px;background:#e8e8e8"></div>
<div class="abs" style="left:1292.5px;top:897px;width:4.5px;height:1.2px;background:#424242"></div>
<div class="abs" style="left:1301.6px;top:896.6px;width:95px;height:1px;background:#616161"></div>
<div class="abs" style="left:1339.3px;top:891.4px;width:4.4px;height:11px;background:#424242;border-radius:1px"></div>
<div class="abs" style="left:1348px;top:894.5px;width:1px;height:5px;background:#616161"></div>
<svg class="abs" style="left:1401px;top:893px" width="8" height="8" viewBox="0 0 8 8"><path d="M4 0 V8 M0 4 H8" stroke="#424242" stroke-width="1.2"></path></svg>
<svg class="abs" style="left:1462.8px;top:892.5px" width="14" height="10" viewBox="0 0 14 10"><rect x=".6" y=".6" width="12.8" height="8.8" rx="1" stroke="#616161" stroke-width="1.1" fill="none"></rect><path d="M3 3.5 V2.5 H4 M10 2.5 H11 V3.5 M11 6.5 V7.5 H10 M4 7.5 H3 V6.5" stroke="#616161" stroke-width=".9" fill="none"></path></svg>
<div class="t" style="left: 1421.5px; top: 891.7px; font-size: 11px; color: rgb(96, 94, 92); font-weight: normal; --w: 22; letter-spacing: -0.01px;">87%</div>
<div class="abs" style="left:1494px;top:0;width:42px;height:912px;background:#f7f7f7"></div>
<svg class="abs" style="left:1505px;top:8px" width="19" height="19" viewBox="0 0 19 19"><circle cx="7.5" cy="7.5" r="5.5" fill="#e3eef8" stroke="#5b5b5b" stroke-width="1.6"></circle><path d="M11.5 11.5 L16.5 16.5" stroke="#c239b3" stroke-width="2.6" stroke-linecap="round"></path></svg>
<svg class="abs" style="left:1506px;top:46px" width="18" height="18" viewBox="0 0 18 18"><path d="M1.5 9.5 L9.5 1.5 H16.5 V8.5 L8.5 16.5 Z" fill="#3b6de8" stroke="#3b6de8" stroke-width="1.5" stroke-linejoin="round"></path><circle cx="13" cy="5" r="1.6" fill="#f5c542"></circle></svg>
<svg class="abs" style="left:1506px;top:85px" width="18" height="16" viewBox="0 0 18 16"><path d="M6 4 V2 H12 V4" stroke="#7a4a2a" stroke-width="1.3" fill="none"></path><rect x="1" y="4" width="16" height="11" rx="1.5" fill="#d9552b"></rect><rect x="1" y="8" width="16" height="1.3" fill="#a83a1a"></rect><rect x="7.8" y="7" width="2.4" height="3" fill="#f3d9c0"></rect></svg>
<svg class="abs" style="left:1505px;top:121px" width="19" height="19" viewBox="0 0 19 19"><circle cx="7" cy="7" r="3" fill="#555"></circle><path d="M4 11 H10 L11 15 H3 Z" fill="#444"></path><rect x="2" y="15" width="10" height="3" rx="1" fill="#333"></rect><path d="M12 2 H13.5 V3.5 H14.5 V2 H16 V3.5 H17 V2 H18.5 V6 L17 7 V12 H18 V14 H12.5 V12 H13.5 V7 L12 6 Z" fill="#b84fd8"></path></svg>
<svg class="abs" style="left:1506px;top:160px" width="18" height="18" viewBox="0 0 18 18"><defs><linearGradient id="m365" x1="0" y1="0" x2="1" y2="1"><stop offset="0" stop-color="#4aa0e6"></stop><stop offset=".5" stop-color="#7b4ed6"></stop><stop offset="1" stop-color="#d05ad0"></stop></linearGradient></defs><path d="M9 1 L16 5 V13 L9 17 L2 13 V5 Z" fill="url(#m365)"></path><circle cx="9" cy="9" r="3" fill="#f7f7f7"></circle></svg>
<svg class="abs" style="left:1505px;top:197px" width="20" height="19" viewBox="0 0 20 19"><rect x="6" y="2" width="13" height="15" rx="1.5" fill="#28a8ea"></rect><rect x="6" y="9" width="13" height="8" fill="#0a64ad"></rect><rect x="1" y="5" width="11" height="11" rx="1.2" fill="#0f78d4"></rect><circle cx="6.5" cy="10.5" r="2.8" stroke="#fff" stroke-width="1.6" fill="none"></circle></svg>
<svg class="abs" style="left:1505px;top:236px" width="19" height="19" viewBox="0 0 19 19"><defs><linearGradient id="dsg" x1="0" y1="0" x2="1" y2="1"><stop offset="0" stop-color="#9a5cf0"></stop><stop offset="1" stop-color="#e455c8"></stop></linearGradient></defs><path d="M2.5 11 C2 15 4.5 17.5 8.5 17.3 C13 17 16.5 13.5 16.5 9.5 L12.5 9.8 C12.3 12 10.8 13.6 8.8 13.6 C6.8 13.6 6 12.2 6.3 10.5 Z" fill="url(#dsg)"></path><path d="M4.5 12 L9.5 3 L11.5 4 L7 12.8 Z" fill="#a35ae8"></path><path d="M11 8.5 L15.5 3.5 L17 5 L12.5 10 Z" fill="#8a4fe0"></path><circle cx="16.3" cy="3.3" r="1.5" fill="#b56cf0"></circle></svg>
<svg class="abs" style="left:1505px;top:276px" width="19" height="15" viewBox="0 0 19 15"><path d="M1 3 L18 1 L11 14 Z" fill="#2b8ce6"></path><path d="M1 3 L18 1 L7 7 Z" fill="#5ab0f5"></path><path d="M1 3 L7 7 L11 14 L6 6.5 Z" fill="#f2a81d"></path><path d="M7 7 L18 1 L11 14 Z" fill="#1f6fc9"></path></svg>
<svg class="abs" style="left:1506px;top:313px" width="18" height="18" viewBox="0 0 18 18"><circle cx="9" cy="9" r="8.5" fill="#1ed760"></circle><path d="M4.5 6.5 C7.5 5.5 11 5.8 13.5 7.2 M5 9.3 C7.5 8.6 10.5 8.8 12.8 10 M5.5 12 C7.5 11.4 10 11.6 12 12.6" stroke="#fff" stroke-width="1.3" stroke-linecap="round" fill="none"></path></svg>
<svg class="abs" style="left:1506px;top:351px" width="18" height="18" viewBox="0 0 18 18"><defs><linearGradient id="msg" x1="0" y1="1" x2="1" y2="0"><stop offset="0" stop-color="#0a7cff"></stop><stop offset=".6" stop-color="#a033ff"></stop><stop offset="1" stop-color="#ff5c87"></stop></linearGradient></defs><path d="M9 1 C4.5 1 1 4.3 1 8.6 C1 10.9 2 12.9 3.7 14.3 V17 L6.3 15.6 C7.1 15.9 8 16.1 9 16.1 C13.5 16.1 17 12.8 17 8.6 C17 4.3 13.5 1 9 1 Z" fill="url(#msg)"></path><path d="M4.5 10.5 L8 7 L10 9 L13.5 6.5 L10 10.5 L8 8.5 Z" fill="#fff" stroke="#fff" stroke-width=".8" stroke-linejoin="round"></path></svg>
<svg class="abs" style="left:1505px;top:388px" width="20" height="19" viewBox="0 0 20 19"><circle cx="15" cy="4" r="2.5" fill="#7b83eb"></circle><rect x="12" y="7.5" width="7.5" height="7.5" rx="3" fill="#7b83eb"></rect><circle cx="10" cy="3.5" r="3" fill="#5059c9"></circle><rect x="6" y="7" width="9.5" height="11" rx="4" fill="#5059c9"></rect><rect x="1" y="5" width="10" height="10" rx="1.2" fill="#4b53bc"></rect><path d="M3.2 7.5 H8.8 M6 7.5 V13" stroke="#fff" stroke-width="1.5"></path></svg>
<div class="abs" style="left:1502px;top:428.5px;width:26px;height:1px;background:#d0d0d0"></div>
<svg class="abs" style="left:1508px;top:453px" width="14" height="14" viewBox="0 0 14 14"><path d="M7 0.5 V13.5 M0.5 7 H13.5" stroke="#424242" stroke-width="1.2"></path></svg>
<div class="abs" style="left:1502px;top:831.5px;width:26px;height:1px;background:#d0d0d0"></div>
<svg class="abs" style="left:1507px;top:846px" width="15" height="14" viewBox="0 0 15 14"><rect x=".7" y=".7" width="13.6" height="12.6" rx="2.5" stroke="#242424" stroke-width="1.3" fill="none"></rect><path d="M9.5 1 V13" stroke="#242424" stroke-width="1.3"></path></svg>
<svg class="abs" style="left:1506.5px;top:882.5px" width="17" height="17" viewBox="0 0 24 24"><path d="M12 1.8l2 .4.6 2.6 1.6.9 2.5-.8 1.4 1.5-.8 2.5.9 1.6 2.6.6.4 2-.4 2-2.6.6-.9 1.6.8 2.5-1.4 1.5-2.5-.8-1.6.9-.6 2.6-2 .4-2-.4-.6-2.6-1.6-.9-2.5.8-1.4-1.5.8-2.5-.9-1.6L1.8 14l-.4-2 .4-2 2.6-.6.9-1.6-.8-2.5 1.4-1.5 2.5.8 1.6-.9.6-2.6z" stroke="#242424" stroke-width="1.7" fill="none" stroke-linejoin="round"></path><circle cx="12" cy="12" r="3.2" stroke="#242424" stroke-width="1.7" fill="none"></circle></svg>
<div class="abs" style="left:259px;top:0;width:257px;height:161px;background:rgba(255,255,255,.1);border-radius:0 0 8px 8px;box-shadow:0 2px 4px rgba(0,0,0,.02)"></div>
<div class="abs" style="left:259px;top:108px;width:257px;height:1px;background:rgba(0,0,0,.02)"></div>
<div class="t" style="left: 266.7px; top: 117.8px; font-size: 12px; color: rgba(0, 0, 0, 0.09); font-weight: normal; --w: 209; letter-spacing: -0.677px;">Copilot Pane Summary Skill Feedback Form</div>
<div class="t" style="left: 288.7px; top: 141.5px; font-size: 12px; color: rgba(0, 0, 0, 0.09); font-weight: normal; --w: 86.7; letter-spacing: -0.07px;">forms.office.com</div>
<!--/RIGHT-->
</div>

</body></html>
